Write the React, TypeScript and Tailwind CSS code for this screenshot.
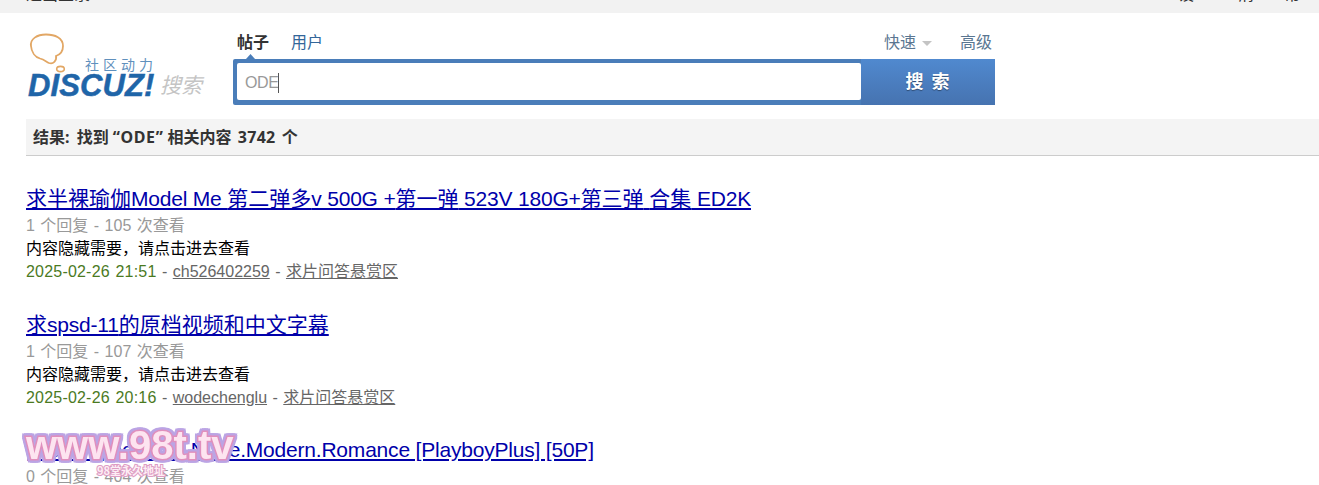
import React from "react";

function Logo() {
  return (
    <div className="relative w-[207px] h-[92px] shrink-0">
      <svg className="absolute left-[2px] top-[20px]" width="40" height="44" viewBox="0 0 40 44" fill="none">
        <path d="M3 13C2 6 9 1.500 18 1.500C27 1.500 35 5 35 13C35 19 31 22 28 23C29 28 25 31.500 21 30C18 28.500 16 26.500 12 25.500C7 24 3.500 19 3 13Z" stroke="#e2a765" strokeWidth="1.800" />
        <ellipse cx="32.500" cy="36" rx="3.800" ry="2.600" stroke="#e2a765" strokeWidth="1.600" />
      </svg>
      <span className="absolute left-[59px] top-[41px] text-[14px] leading-[20px] tracking-[4px] text-[#5f90bd] font-['Noto_Sans_CJK_SC',sans-serif]">社区动力</span>
      <span className="absolute left-[2px] top-[55px] text-[31px] leading-[36px] font-bold italic tracking-[0.100px] text-[#1f65a8] [-webkit-text-stroke:0.500px_#1f65a8] font-['Liberation_Sans',sans-serif]">DISCUZ!</span>
      <span className="absolute left-[134px] top-[56px] text-[21px] leading-[30px] italic text-[#c4c4c4] font-['Noto_Sans_CJK_SC',sans-serif]">搜索</span>
    </div>
  );
}

function Title({ text }: { text: string }) {
  const parts = text.split(/([\x00-\x7f]+)/).filter(Boolean);
  return (
    <a className="block text-[21px] leading-[28px] text-[#0000aa] underline">
      {parts.map((part, i) => (
        <span key={i} className={/[\x00-\x7f]/.test(part) ? "tracking-[-0.200px]" : ""}>{part}</span>
      ))}
    </a>
  );
}

function Item({ title, replies, views, date, user, forum }: { title: string; replies: string; views: string; date?: string; user?: string; forum?: string }) {
  return (
    <li className="h-[125.500px]">
      <Title text={title} />
      <p className="mt-[1.400px] text-[16px] leading-[23px] text-[#999999] [word-spacing:1px]">{replies} 个回复 - {views} 次查看</p>
      {date && (
        <>
          <p className="text-[16px] leading-[23px] text-black">内容隐藏需要，请点击进去查看</p>
          <p className="text-[16px] leading-[23px] text-[#666666] [word-spacing:1px]">
            <span className="text-[#4b7a1f] tracking-[0.200px]">{date}</span> - <a className="underline">{user}</a> - <a className="underline">{forum}</a>
          </p>
        </>
      )}
    </li>
  );
}

export default function App() {
  return (
    <div className="relative w-[1319px] h-[485px] overflow-hidden bg-white font-['Liberation_Sans','Noto_Sans_CJK_SC',sans-serif]">
      <div className="h-[13px] overflow-hidden bg-[#f2f2f2] flex justify-between pl-[26px] pr-[19px] text-[16px] leading-[16px] text-[#333333]">
        <span className="-mt-[13px]">退出登录</span>
        <span className="-mt-[13px] flex">
          <span>设</span>
          <span className="ml-[44px]">消</span>
          <span className="ml-[30px]">帮</span>
        </span>
      </div>

      <div className="flex pl-[26px] -mb-[3px]">
        <Logo />
        <div className="w-[762px]">
          <div className="h-[46px] relative flex items-end pb-[4px] text-[16px] leading-[24px] text-[#336699]">
            <strong className="ml-[4px] text-[#333333] font-bold">帖子</strong>
            <span className="ml-[22px]">用户</span>
            <span className="ml-auto text-[#5a7691] flex items-center">
              快速
              <svg className="ml-[6px]" width="10" height="5" viewBox="0 0 10 5"><path d="M0 0H10L5 5Z" fill="#c4c4c4" /></svg>
            </span>
            <span className="ml-[28px] mr-[3px] text-[#5a7691]">高级</span>
            <svg className="absolute left-[13px] bottom-0" width="9" height="5" viewBox="0 0 9 5"><path d="M0 5L4.500 0L9 5Z" fill="#4a7db9" /></svg>
          </div>
          <div className="flex h-[46px] rounded-[2px] bg-[#4a7db9] p-[4px] pr-0">
            <div className="w-[624px] h-[37px] bg-white rounded-[2px] flex items-center pl-[8px] pt-[2px] text-[16px] tracking-[-0.400px] text-[#999999]">
              ODE<span className="w-px h-[20px] bg-[#555555]" />
            </div>
            <div className="flex-1 -my-[4px] flex items-center justify-center bg-gradient-to-b from-[#5089cf] to-[#4673b0] text-[18px] font-bold tracking-[8px] text-white pl-[7px] [text-shadow:0_1px_1px_rgba(0,0,0,0.4)]">搜索</div>
          </div>
        </div>
      </div>

      <div className="ml-[26px] mt-[17px] h-[37px] bg-[#f4f4f4] border-b border-[#cccccc] pl-[7px] text-[16px] leading-[36px] font-bold text-[#333333] font-['Noto_Sans','Noto_Sans_CJK_SC',sans-serif]">
        <span className="mr-[3px]">结果:</span> 找到 <span className="tracking-[0.600px]">“ODE”</span> 相关内容 <span className="tracking-[0.300px] ml-[2px]">3742</span> <span className="ml-[2px]">个</span>
      </div>

      <ul className="ml-[26px] mt-[29px]">
        <Item title="求半裸瑜伽Model Me 第二弹多v 500G +第一弹 523V 180G+第三弹 合集 ED2K" replies="1" views="105" date="2025-02-26 21:51" user="ch526402259" forum="求片问答悬赏区" />
        <Item title="求spsd-11的原档视频和中文字幕" replies="1" views="107" date="2025-02-26 20:16" user="wodechenglu" forum="求片问答悬赏区" />
        <Item title="[XiuRen] no.9876 Nude.Modern.Romance [PlayboyPlus] [50P]" replies="0" views="404" />
      </ul>

      <div className="absolute left-[26px] top-[423px] text-[40px] leading-[44px] font-bold text-[#fde4f0] [-webkit-text-stroke:3px_#e08fbd] [paint-order:stroke_fill] [filter:drop-shadow(2px_0_0_#bba4e4)_drop-shadow(-2px_0_0_#bba4e4)_drop-shadow(0_2px_0_#bba4e4)_drop-shadow(0_-2px_0_#bba4e4)] font-['Liberation_Sans',sans-serif]">www.98t.tv</div>
      <div className="absolute left-[97px] top-[462px] text-[11px] leading-[16px] font-bold text-[#fdeef5] [-webkit-text-stroke:2px_#de9cc3] [paint-order:stroke_fill] font-['Noto_Sans_CJK_SC',sans-serif]">98堂永久地址</div>
    </div>
  );
}
